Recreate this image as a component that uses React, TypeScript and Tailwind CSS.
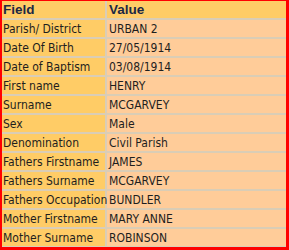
const rows: [string, string][] = [
  ["Parish/ District", "URBAN 2"],
  ["Date Of Birth", "27/05/1914"],
  ["Date of Baptism", "03/08/1914"],
  ["First name", "HENRY"],
  ["Surname", "MCGARVEY"],
  ["Sex", "Male"],
  ["Denomination", "Civil Parish"],
  ["Fathers Firstname", "JAMES"],
  ["Fathers Surname", "MCGARVEY"],
  ["Fathers Occupation", "BUNDLER"],
  ["Mother Firstname", "MARY ANNE"],
  ["Mother Surname", "ROBINSON"],
];

export default function App() {
  return (
    <div className="w-[289px] h-[250px] overflow-hidden bg-[#ff0000] pt-[1px] pl-[2px] pr-[3px] pb-[3px]">
      <div
        className="grid grid-cols-[103px_1fr] auto-rows-[17px] gap-[2px] h-full bg-[#dacdb6] text-[12px] text-[#1e1e1e]"
        style={{ fontFamily: '"DejaVu Sans Condensed", "DejaVu Sans", sans-serif' }}
      >
        <div
          className="bg-[#ffcc66] pl-[1px] font-bold text-[13.5px] text-[#1c2844] leading-[17px]"
          style={{ fontFamily: '"Liberation Sans", Arial, sans-serif' }}
        >
          Field
        </div>
        <div
          className="bg-[#ffcc66] pl-[2px] font-bold text-[13.5px] text-[#1c2844] leading-[17px]"
          style={{ fontFamily: '"Liberation Sans", Arial, sans-serif' }}
        >
          Value
        </div>
        {rows.map(([field, value]) => (
          <>
            <div key={field} className="bg-[#ffcc66] pl-[1px] leading-[18px] whitespace-nowrap">
              {field}
            </div>
            <div key={field + "v"} className="bg-[#ffcc99] pl-[2px] leading-[18px] whitespace-nowrap">
              {value}
            </div>
          </>
        ))}
      </div>
    </div>
  );
}
